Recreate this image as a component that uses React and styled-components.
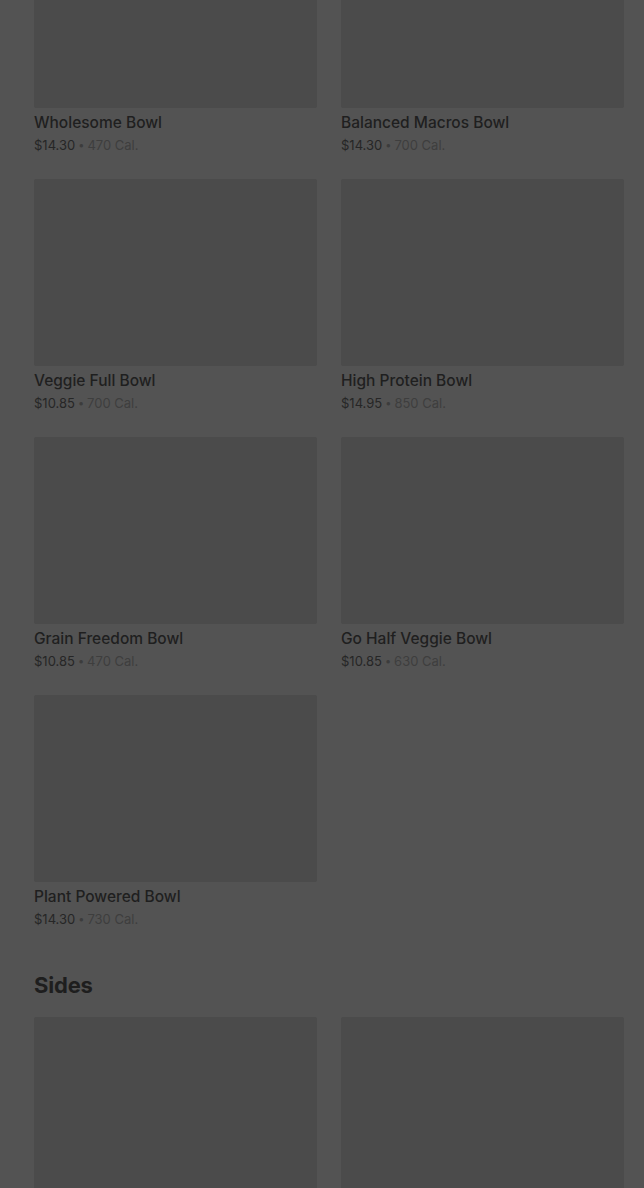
import React from 'react';
import styled, { createGlobalStyle } from 'styled-components';

const GlobalStyle = createGlobalStyle`
  html, body {
    margin: 0;
    padding: 0;
    background: #535353;
    overflow: hidden;
  }
  body {
    font-family: Inter, "Noto Sans", "Liberation Sans", sans-serif;
    -webkit-font-smoothing: antialiased;
  }
`;

const Page = styled.div`
  width: 644px;
  height: 1188px;
  overflow: hidden;
  background: #535353;
  box-sizing: border-box;
  padding: 0 20px 0 34px;
`;

const Scroller = styled.div`
  margin-top: -79px;
  display: flex;
  flex-flow: column nowrap;
`;

const Section = styled.section`
  display: flex;
  flex-flow: column nowrap;
`;

const Heading = styled.h2`
  margin: 41px 0 16px;
  height: 32px;
  font-size: 22px;
  line-height: 32px;
  font-weight: 700;
  color: #1e1e1e;
  letter-spacing: -0.2px;
`;

const Grid = styled.div`
  display: grid;
  grid-template-columns: 283px 283px;
  column-gap: 24px;
  row-gap: 25px;
`;

const Card = styled.div`
  display: flex;
  flex-flow: column nowrap;
`;

const Thumb = styled.div`
  height: 187px;
  flex: none;
  background: #4b4b4b;
  border-radius: 2px;
`;

const Name = styled.div`
  margin-top: 5px;
  height: 20px;
  font-size: 15.5px;
  line-height: 20px;
  font-weight: 500;
  color: #1f1f1f;
  white-space: nowrap;
`;

const Meta = styled.div`
  margin-top: 3px;
  height: 18px;
  display: flex;
  align-items: center;
  font-size: 13px;
  line-height: 18px;
  color: #262626;
  white-space: nowrap;
`;

const Dot = styled.span`
  margin: 0 3px;
  font-size: 11px;
  line-height: 18px;
  color: #3c3c3c;
`;

const Cal = styled.span`
  color: #3e3e3e;
`;

const BOWLS = [
  { name: 'Wholesome Bowl', price: '$14.30', cal: '470 Cal.' },
  { name: 'Balanced Macros Bowl', price: '$14.30', cal: '700 Cal.' },
  { name: 'Veggie Full Bowl', price: '$10.85', cal: '700 Cal.' },
  { name: 'High Protein Bowl', price: '$14.95', cal: '850 Cal.' },
  { name: 'Grain Freedom Bowl', price: '$10.85', cal: '470 Cal.' },
  { name: 'Go Half Veggie Bowl', price: '$10.85', cal: '630 Cal.' },
  { name: 'Plant Powered Bowl', price: '$14.30', cal: '730 Cal.' },
];

const SIDES = [{ name: '' }, { name: '' }];

function MenuItem({ item }) {
  return (
    <Card>
      <Thumb />
      {item.name && <Name>{item.name}</Name>}
      {item.price && (
        <Meta>
          {item.price}
          <Dot>•</Dot>
          <Cal>{item.cal}</Cal>
        </Meta>
      )}
    </Card>
  );
}

export default function App() {
  return (
    <>
      <GlobalStyle />
      <Page>
        <Scroller>
          <Section>
            <Grid>
              {BOWLS.map(item => (
                <MenuItem key={item.name} item={item} />
              ))}
            </Grid>
          </Section>
          <Section>
            <Heading>Sides</Heading>
            <Grid>
              {SIDES.map((item, i) => (
                <MenuItem key={i} item={item} />
              ))}
            </Grid>
          </Section>
        </Scroller>
      </Page>
    </>
  );
}
